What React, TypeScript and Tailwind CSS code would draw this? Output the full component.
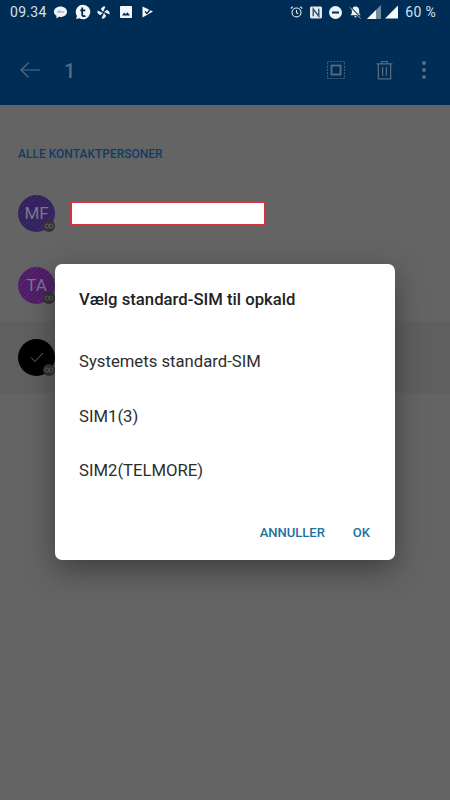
import React from "react";

function Avatar({ bg, label, check }: { bg: string; label?: string; check?: boolean }) {
  return (
    <div className={`relative w-[37px] h-[37px] rounded-full flex items-center justify-center shrink-0 ${bg}`}>
      {label && <span className="text-[17px] leading-none text-[#7a768d] mt-[1px]">{label}</span>}
      {check && (
        <svg width="18" height="18" viewBox="0 0 18 18" fill="none" stroke="#6e6e6e" strokeWidth="1">
          <path d="M3 9.500l4 4 8-8.500" />
        </svg>
      )}
      <div className="absolute left-[25px] top-[25px] w-[12px] h-[12px] rounded-full bg-[#333333] flex items-center justify-center">
        <svg width="10" height="6" viewBox="0 0 10 6" fill="none" stroke="#5e5e5e" strokeWidth="1">
          <circle cx="3" cy="3" r="2" />
          <circle cx="7" cy="3" r="2" />
        </svg>
      </div>
    </div>
  );
}

function StatusLeft() {
  return (
    <div className="flex items-center">
      <span className="text-[14px] leading-none text-[#d5e0e8] tracking-[0.3px] w-[43px] ml-[10px]">09.34</span>
      <svg width="15" height="15" viewBox="0 0 16 16">
        <path d="M8 1.500c4 0 7 2.500 7 5.600s-3 5.600-7 5.600c-.6 0-1.100 0-1.600-.1L3.600 14.500l.1-3C2 10.500 1 8.900 1 7.100 1 4 4 1.500 8 1.500z" fill="#eef3f6" />
        <text x="8" y="8.800" textAnchor="middle" fontSize="4.500" fontFamily="Roboto, sans-serif" fill="#7b8c9c">dbo</text>
      </svg>
      <svg width="16" height="16" viewBox="0 0 16 16" className="ml-[7px]">
        <path d="M8 .8a7.200 7.200 0 1 1-3.600 13.400L1 15l1-3A7.200 7.200 0 0 1 8 .8z" fill="#f5f7f9" />
        <path d="M7.200 3.500v7c0 1.200.8 1.700 1.800 1.700.6 0 1.100-.1 1.500-.3M5.300 6.300h5" stroke="#002d55" strokeWidth="1.800" fill="none" />
      </svg>
      <svg width="13" height="13" viewBox="0 0 13 13" className="ml-[6px]" fill="#f0f4f7">
        <path d="M6 .5h2.500L6 6zM12.500 6v2.500L7 6zM7 12.500H4.500L7 7zM.5 7V4.500L6 7z" />
        <path d="M6 .5L3.800 3 6 6zM12.500 6L10 3.800 7 6zM7 12.500L9.200 10 7 7zM.5 7L3 9.200 6 7z" />
      </svg>
      <svg width="12" height="12" viewBox="0 0 12 12" className="ml-[10px]">
        <rect width="12" height="12" rx="1" fill="#f5f7f9" />
        <path d="M2 9.500l2.200-3 1.600 1.800 1.600-2 2.600 3.200z" fill="#002d55" />
      </svg>
      <svg width="12" height="12" viewBox="0 0 12 12" className="ml-[10px]">
        <path d="M.5 .5L11 5.500 .5 11.500z" fill="#f5f7f9" />
        <path d="M3 5.500l2 2L9 2.500" stroke="#002d55" strokeWidth="1.500" fill="none" />
      </svg>
    </div>
  );
}

function StatusRight() {
  return (
    <div className="flex items-center">
      <svg width="13" height="14" viewBox="0 0 14 14" fill="none" stroke="#e3eaef" strokeWidth="1.200">
        <circle cx="7" cy="7.500" r="4.800" />
        <path d="M7 4.800v3l2 1.200M.8 3.200L3 1.200M13.200 3.200L11 1.200" />
      </svg>
      <svg width="12" height="13" viewBox="0 0 13 13" className="ml-[7px]">
        <rect width="13" height="13" rx="1.500" fill="#e3e9ee" />
        <path d="M3.500 10.500V2.800L9.500 10.500V2.500" stroke="#2f4f6b" strokeWidth="1.500" fill="none" />
      </svg>
      <svg width="13" height="13" viewBox="0 0 13 13" className="ml-[7px]">
        <circle cx="6.500" cy="6.500" r="6.500" fill="#f2f5f7" />
        <rect x="3" y="5.500" width="7" height="2" fill="#002d55" />
      </svg>
      <svg width="13" height="14" viewBox="0 0 14 14" className="ml-[7px]">
        <path d="M7 1c2.600 0 4 1.800 4 4.300v3.200l1.500 2H1.500L3 8.500V5.300C3 2.800 4.400 1 7 1zM5.700 11.500h2.600a1.300 1.300 0 0 1-2.600 0z" fill="#f0f4f7" />
        <path d="M1.500 1.500l11.500 12" stroke="#002d55" strokeWidth="1.300" />
        <path d="M1 2l11.500 12" stroke="#f0f4f7" strokeWidth="0.800" />
      </svg>
      <svg width="14" height="14" viewBox="0 0 14 14" className="ml-[5px]">
        <path d="M14 0v14H0z" fill="#76899a" />
        <path d="M9 5v9H0z" fill="#f5f7f9" />
      </svg>
      <svg width="13" height="14" viewBox="0 0 14 14" className="ml-[4px]">
        <path d="M14 0v14H0z" fill="#f5f7f9" />
      </svg>
      <span className="text-[14px] leading-none text-[#d5e0e8] ml-[7px] mr-[14px] tracking-[0.3px]">60 %</span>
    </div>
  );
}

function Toolbar() {
  return (
    <div className="flex items-center h-[70px] pb-[1px] text-[#566c82]">
      <svg width="20" height="16" viewBox="0 0 20 16" fill="none" stroke="#566c82" strokeWidth="1.200" className="ml-[20px]">
        <path d="M20 8H1M8.500 .8L1 8l7.500 7.200" />
      </svg>
      <span className="ml-[24px] text-[20px] font-medium leading-none mt-[2px]">1</span>
      <div className="ml-auto flex items-center">
        <svg width="18" height="18" viewBox="0 0 18 18" fill="none" stroke="#566c82">
          <rect x=".5" y=".5" width="17" height="17" strokeDasharray="1.500 1.600" strokeWidth="1.200" />
          <rect x="4.500" y="4.500" width="9" height="9" strokeWidth="1.800" />
        </svg>
        <svg width="17" height="20" viewBox="0 0 18 21" fill="none" stroke="#566c82" strokeWidth="1.300" className="ml-[31px]">
          <path d="M.5 4h17M6 4V1.500h6V4M2.500 4v16h13V4M7 7.500v9M11 7.500v9" />
        </svg>
        <div className="ml-[29px] mr-[24px] flex flex-col gap-[3px]">
          <div className="w-[4px] h-[4px] rounded-full bg-[#566c82]" />
          <div className="w-[4px] h-[4px] rounded-full bg-[#566c82]" />
          <div className="w-[4px] h-[4px] rounded-full bg-[#566c82]" />
        </div>
      </div>
    </div>
  );
}

export default function App() {
  return (
    <div className="relative w-[450px] h-[800px] overflow-hidden bg-[#646464] font-['Roboto',sans-serif]">
      <header className="h-[105px] bg-[#002d55]">
        <div className="h-[24px] flex items-center justify-between">
          <StatusLeft />
          <StatusRight />
        </div>
        <div className="h-[11px]" />
        <Toolbar />
      </header>

      <div className="h-[72px] pl-[18px] pt-[42px] text-[12px] font-medium leading-[14px] text-[#0e3d63]">
        ALLE KONTAKTPERSONER
      </div>

      <div className="h-[72px] flex items-center pl-[18px]">
        <Avatar bg="bg-[repeating-linear-gradient(135deg,#33205f_0px,#33205f_2px,#3c2a66_2px,#3c2a66_3px)]" label="MF" />
        <div className="ml-[15px] w-[196px] h-[25px] bg-white border-2 border-[#d6323f]" />
      </div>
      <div className="h-[72px] flex items-center pl-[18px]">
        <Avatar bg="bg-[repeating-linear-gradient(135deg,#4f1c68_0px,#4f1c68_2px,#58286e_2px,#58286e_3px)]" label="TA" />
      </div>
      <div className="h-[72px] flex items-center pl-[18px] bg-[#5f5f5f]">
        <Avatar bg="bg-black" check />
      </div>

      <div className="absolute left-[55px] top-[264px] w-[340px] h-[296px] rounded-[7px] bg-white shadow-[0_10px_30px_rgba(0,0,0,0.38)] flex flex-col">
        <div className="pl-[24px] pt-[26px] text-[16.7px] font-medium leading-[20px] text-[#222222] h-[71px]">
          Vælg standard-SIM til opkald
        </div>
        <div className="flex flex-col text-[16.7px] leading-[20px] text-[#2d2d2d] pl-[24px]">
          <div className="h-[54px] flex items-center">Systemets standard-SIM</div>
          <div className="h-[55px] flex items-center">SIM1(3)</div>
          <div className="h-[54px] flex items-center">SIM2(TELMORE)</div>
        </div>
        <div className="flex justify-end items-center pr-[25px] mt-[27px] text-[13px] font-medium leading-[16px] text-[#1f6f9f]">
          <span>ANNULLER</span>
          <span className="ml-[28px]">OK</span>
        </div>
      </div>
    </div>
  );
}
